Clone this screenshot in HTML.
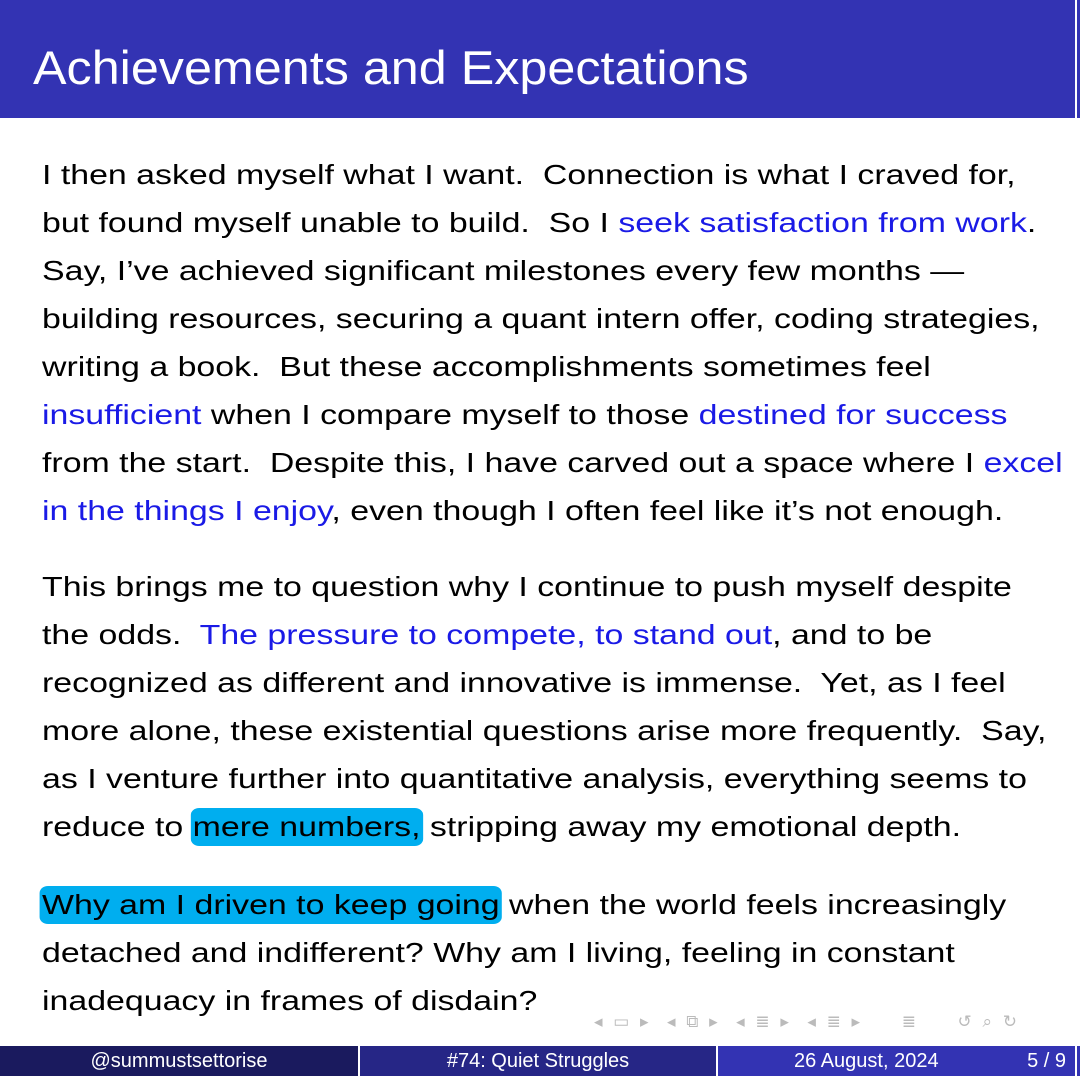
<!DOCTYPE html>
<html><head><meta charset="utf-8"><style>
*{margin:0;padding:0;box-sizing:border-box}
html,body{width:1080px;height:1080px;overflow:hidden;background:#fff}
body{position:relative;font-family:"Liberation Sans",sans-serif;color:#000}
.hdr{position:absolute;left:0;top:0;width:1075px;height:118px;background:#3333b3}
.hdr2{position:absolute;left:1077px;top:0;width:3px;height:118px;background:#3333b3}
.title{position:absolute;left:33px;top:38px;font-size:47px;color:#fff;line-height:60px;white-space:nowrap;transform:scaleX(1.07);transform-origin:0 0}
.l{position:absolute;left:42px;font-size:28px;line-height:34px;white-space:nowrap;transform:scaleX(1.21);transform-origin:0 0}
.b{color:#1a1ae6}
.h{background:#00aeef;border-radius:7px;padding:3px 2px 4px;margin:0 -2px}
.f{position:absolute;top:1046px;height:30px;color:#fff;font-size:20px;line-height:30px;white-space:nowrap}
.nav{position:absolute;top:1012px;left:594px;font-size:17px;color:#bbb;white-space:nowrap;letter-spacing:3px}
</style></head><body>
<div class="hdr"></div><div class="hdr2"></div>
<div class="title">Achievements and Expectations</div>

<div class="l" style="top:158px">I then asked myself what I want.&nbsp; Connection is what I craved for,</div>
<div class="l" style="top:206px">but found myself unable to build.&nbsp; So I <span class="b">seek satisfaction from work</span>.</div>
<div class="l" style="top:254px">Say, I’ve achieved significant milestones every few months —</div>
<div class="l" style="top:302px">building resources, securing a quant intern offer, coding strategies,</div>
<div class="l" style="top:350px">writing a book.&nbsp; But these accomplishments sometimes feel</div>
<div class="l" style="top:398px"><span class="b">insufficient</span> when I compare myself to those <span class="b">destined for success</span></div>
<div class="l" style="top:446px">from the start.&nbsp; Despite this, I have carved out a space where I <span class="b">excel</span></div>
<div class="l" style="top:494px"><span class="b">in the things I enjoy</span>, even though I often feel like it’s not enough.</div>

<div class="l" style="top:570px">This brings me to question why I continue to push myself despite</div>
<div class="l" style="top:618px">the odds.&nbsp; <span class="b">The pressure to compete, to stand out</span>, and to be</div>
<div class="l" style="top:666px">recognized as different and innovative is immense.&nbsp; Yet, as I feel</div>
<div class="l" style="top:714px">more alone, these existential questions arise more frequently.&nbsp; Say,</div>
<div class="l" style="top:762px">as I venture further into quantitative analysis, everything seems to</div>
<div class="l" style="top:810px">reduce to <span class="h">mere numbers,</span> stripping away my emotional depth.</div>

<div class="l" style="top:888px"><span class="h">Why am I driven to keep going</span> when the world feels increasingly</div>
<div class="l" style="top:936px">detached and indifferent? Why am I living, feeling in constant</div>
<div class="l" style="top:984px">inadequacy in frames of disdain?</div>

<div class="nav">◂ ▭ ▸&nbsp; ◂ ⧉ ▸&nbsp; ◂ ≣ ▸&nbsp; ◂ ≣ ▸&nbsp;&nbsp;&nbsp;&nbsp; ≣&nbsp;&nbsp;&nbsp;&nbsp; ↺ ⌕ ↻</div>

<div class="f" style="left:0;width:358px;background:#1a1a5e;text-align:center">@summustsettorise</div>
<div class="f" style="left:360px;width:356px;background:#262686;text-align:center">#74: Quiet Struggles</div>
<div class="f" style="left:718px;width:357px;background:#3333b3"><span style="position:absolute;left:76px">26 August, 2024</span><span style="position:absolute;right:9px">5 / 9</span></div>
<div class="f" style="left:1077px;width:3px;background:#3333b3"></div>
</body></html>
